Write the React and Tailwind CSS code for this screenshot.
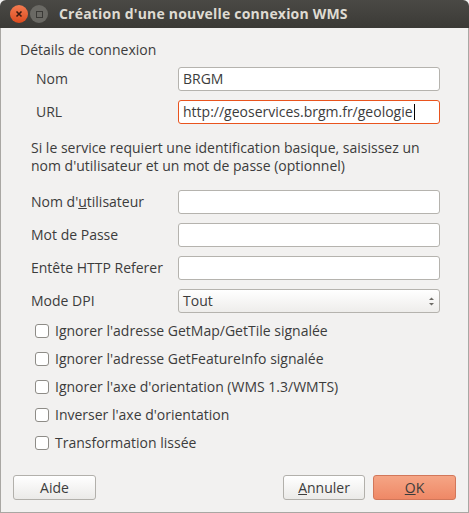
import React from "react";

const font = { fontFamily: '"Open Sans", "Noto Sans", sans-serif' };

function Field({ label, value, focused, lw = "w-[147px]" }) {
  return (
    <div className="flex items-center h-[24px]">
      <div className={`${lw} shrink-0`}>{label}</div>
      <div
        className={`w-[262px] h-[24px] rounded-[3px] bg-white flex items-center px-[4px] border ${
          focused ? "border-[#e9541e]" : "border-[#b5b3ae]"
        }`}
      >
        {value}
        {focused && <span className="inline-block w-px h-[16px] bg-black ml-px" />}
      </div>
    </div>
  );
}

function Check({ label }) {
  return (
    <div className="flex items-center h-[28px]">
      <div className="w-[14px] h-[14px] rounded-[3px] border border-[#8e8c87] bg-white" />
      <span className="ml-[6px]">{label}</span>
    </div>
  );
}

function Btn({ children, primary, w }) {
  return (
    <div
      className={`h-[25px] rounded-[3px] border flex items-center justify-center ${w} ${
        primary
          ? "border-[#d2775a] bg-gradient-to-b from-[#f5a585] to-[#ef8866]"
          : "border-[#b2b0ab] bg-gradient-to-b from-white to-[#ebeae8]"
      }`}
    >
      {children}
    </div>
  );
}

export default function App() {
  return (
    <div className="w-[469px] h-[513px] bg-[#f2f1f0] text-[14px] leading-[18px] text-[#3c3c3c] flex flex-col" style={font}>
      <div className="h-[28px] bg-gradient-to-b from-[#4a4945] to-[#3b3a36] rounded-t-[6px] flex items-center px-[10px] shrink-0">
        <div className="w-[18px] h-[18px] rounded-full bg-gradient-to-b from-[#f37b50] to-[#dc4a1c] flex items-center justify-center">
          <svg width="8" height="8" viewBox="0 0 8 8">
            <path d="M1.5 1.5L6.5 6.5M6.5 1.5L1.5 6.5" stroke="#3a1a10" strokeWidth="1.6" />
          </svg>
        </div>
        <div className="w-[18px] h-[18px] ml-[2px] rounded-full bg-[#6a6964] flex items-center justify-center">
          <div className="w-[7px] h-[7px] border border-[#3a3936]" />
        </div>
        <div className="ml-[11px] text-[14px] font-bold text-[#dfdbd2] tracking-[0.2px]">
          Création d'une nouvelle connexion WMS
        </div>
      </div>
      <div className="flex-1 border-x border-b border-[#a9a7a3] flex flex-col">
        <div className="pl-[19px] pt-[13px]">Détails de connexion</div>
        <div className="pl-[35px] pt-[8px] flex flex-col gap-[9px]">
          <Field label="Nom" value="BRGM" lw="w-[142px]" />
          <Field label="URL" value="http://geoservices.brgm.fr/geologie" focused lw="w-[142px]" />
        </div>
        <div className="pl-[30px] pt-[15px] pr-[24px]">
          Si le service requiert une identification basique, saisissez un nom d'utilisateur et un mot de passe (optionnel)
        </div>
        <div className="pl-[30px] pt-[15px] flex flex-col gap-[9px]">
          <div className="flex items-center h-[24px]">
            <div className="w-[147px] shrink-0">
              Nom d'<span className="underline">u</span>tilisateur
            </div>
            <div className="w-[262px] h-[24px] rounded-[3px] bg-white border border-[#b5b3ae]" />
          </div>
          <Field label="Mot de Passe" />
          <Field label="Entête HTTP Referer" />
          <div className="flex items-center h-[24px]">
            <div className="w-[147px] shrink-0">Mode DPI</div>
            <div className="w-[262px] h-[24px] rounded-[3px] border border-[#b5b3ae] bg-gradient-to-b from-white to-[#eeedeb] flex items-center justify-between px-[4px]">
              <span>Tout</span>
              <svg width="7" height="12" viewBox="0 0 7 12">
                <path d="M1 5L3.5 2.5L6 5Z" fill="#6d6b66" />
                <path d="M1 8L3.5 10.5L6 8Z" fill="#6d6b66" />
              </svg>
            </div>
          </div>
        </div>
        <div className="pl-[34px] pt-[4px] flex flex-col">
          <Check label="Ignorer l'adresse GetMap/GetTile signalée" />
          <Check label="Ignorer l'adresse GetFeatureInfo signalée" />
          <Check label="Ignorer l'axe d'orientation (WMS 1.3/WMTS)" />
          <Check label="Inverser l'axe d'orientation" />
          <Check label="Transformation lissée" />
        </div>
        <div className="mt-auto flex items-center px-[12px] pb-[12px]">
          <Btn w="w-[83px]">Aide</Btn>
          <div className="flex-1" />
          <Btn w="w-[82px]">
            <span><span className="underline">A</span>nnuler</span>
          </Btn>
          <div className="w-[8px]" />
          <Btn w="w-[83px]" primary>
            <span><span className="underline">O</span>K</span>
          </Btn>
        </div>
      </div>
    </div>
  );
}
